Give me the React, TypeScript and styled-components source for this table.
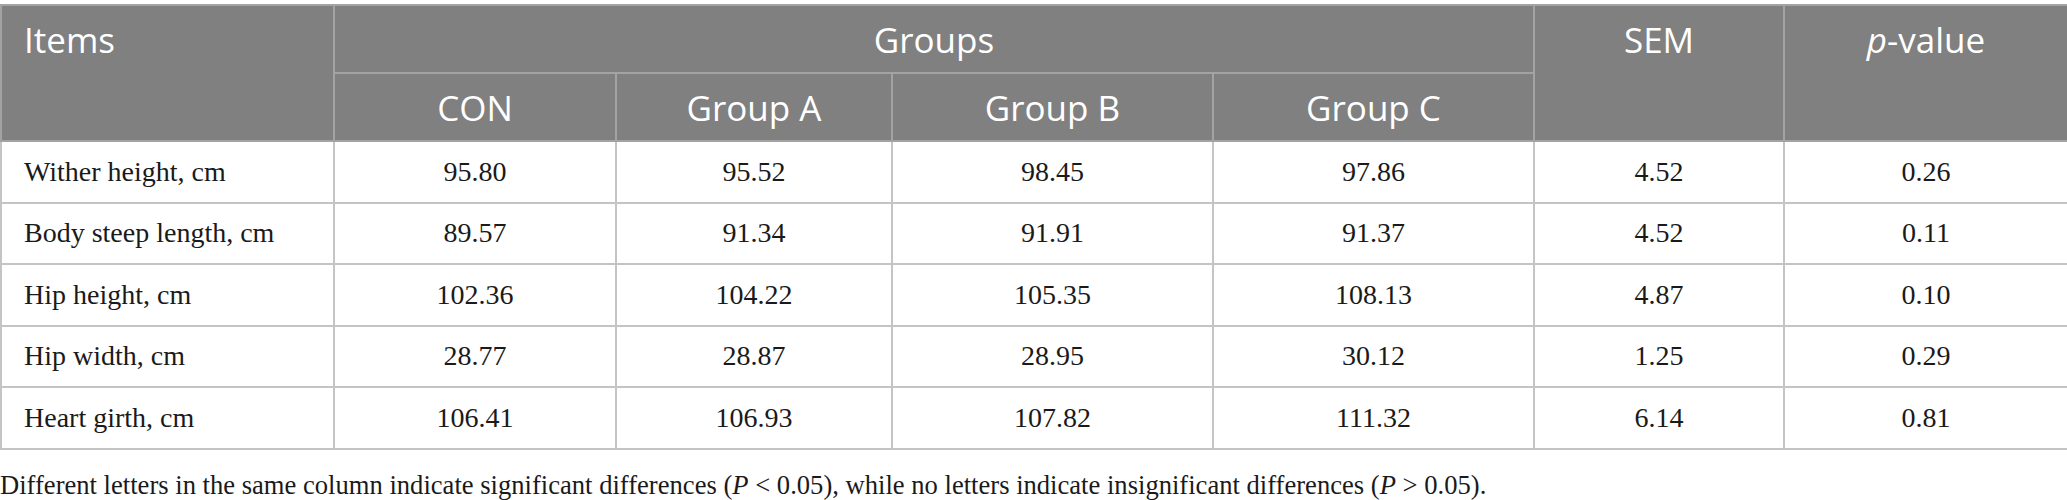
import styled, { createGlobalStyle } from "styled-components";

const COLUMN_WIDTHS = [333, 282, 276, 321, 321, 250, 284];

const ROWS = [
  { name: "Wither height, cm", values: ["95.80", "95.52", "98.45", "97.86", "4.52", "0.26"] },
  { name: "Body steep length, cm", values: ["89.57", "91.34", "91.91", "91.37", "4.52", "0.11"] },
  { name: "Hip height, cm", values: ["102.36", "104.22", "105.35", "108.13", "4.87", "0.10"] },
  { name: "Hip width, cm", values: ["28.77", "28.87", "28.95", "30.12", "1.25", "0.29"] },
  { name: "Heart girth, cm", values: ["106.41", "106.93", "107.82", "111.32", "6.14", "0.81"] },
];

const GlobalStyle = createGlobalStyle`
  body {
    margin: 0;
    padding-top: 4px;
    background: #ffffff;
  }
`;

export default function App() {
  return (
    <>
      <GlobalStyle />
      <S.Wrapper>
        <S.Table>
          <colgroup>
            {COLUMN_WIDTHS.map((w, i) => (
              <col key={i} style={{ width: w }} />
            ))}
          </colgroup>
          <thead>
            <tr>
              <S.HeadCell rowSpan={2} $align="left">
                Items
              </S.HeadCell>
              <S.HeadCell colSpan={4}>Groups</S.HeadCell>
              <S.HeadCell rowSpan={2}>SEM</S.HeadCell>
              <S.HeadCell rowSpan={2}>
                <i>p</i>-value
              </S.HeadCell>
            </tr>
            <tr>
              <S.HeadCell>CON</S.HeadCell>
              <S.HeadCell>Group A</S.HeadCell>
              <S.HeadCell>Group B</S.HeadCell>
              <S.HeadCell>Group C</S.HeadCell>
            </tr>
          </thead>
          <tbody>
            {ROWS.map((row) => (
              <tr key={row.name}>
                <S.Cell $align="left">{row.name}</S.Cell>
                {row.values.map((v, i) => (
                  <S.Cell key={i}>{v}</S.Cell>
                ))}
              </tr>
            ))}
          </tbody>
        </S.Table>
        <S.Footnote>
          Different letters in the same column indicate significant differences (
          <i>P</i> &lt; 0.05), while no letters indicate insignificant differences (
          <i>P</i> &gt; 0.05).
        </S.Footnote>
      </S.Wrapper>
    </>
  );
}

const S = {
  Wrapper: styled.div`
    width: 2067px;
  `,

  Table: styled.table`
    width: 2067px;
    table-layout: fixed;
    border-collapse: collapse;
    border: 2px solid #c4c4c4;
  `,

  HeadCell: styled.th<{ $align?: string }>`
    height: 68px;
    padding: 13px 22px 0;
    box-sizing: border-box;
    vertical-align: top;
    text-align: ${(p) => p.$align || "center"};
    background: #7f807f;
    color: #ffffff;
    font-family: "Open Sans", "Noto Sans", sans-serif;
    font-weight: 400;
    font-size: 35px;
    line-height: 42px;
    border: 2px solid #a3a3a3;

    i {
      font-style: italic;
    }
  `,

  Cell: styled.td<{ $align?: string }>`
    height: 61.5px;
    padding: 0 22px;
    box-sizing: border-box;
    vertical-align: middle;
    text-align: ${(p) => p.$align || "center"};
    color: #1a1a1a;
    font-family: "Liberation Serif", "Times New Roman", serif;
    font-size: 28px;
    border: 2px solid #c4c4c4;
  `,

  Footnote: styled.p`
    margin: 20px 0 0;
    font-family: "Liberation Serif", "Times New Roman", serif;
    font-size: 26.6px;
    color: #1a1a1a;
  `,
};
